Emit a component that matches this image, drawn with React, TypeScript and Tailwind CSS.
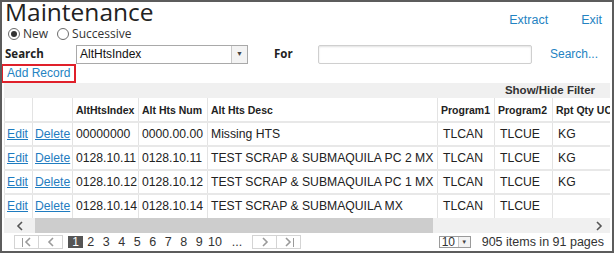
import { ReactNode } from 'react';

const sans = "font-['Open_Sans','Liberation_Sans',sans-serif]";
const arial = "font-['Liberation_Sans',Arial,sans-serif]";

type Row = { index: string; num: string; desc: string; p1: string; p2: string; uom: string };

const rows: Row[] = [
  { index: '00000000', num: '0000.00.00', desc: 'Missing HTS', p1: 'TLCAN', p2: 'TLCUE', uom: 'KG' },
  { index: '0128.10.11', num: '0128.10.11', desc: 'TEST SCRAP & SUBMAQUILA PC 2 MX', p1: 'TLCAN', p2: 'TLCUE', uom: 'KG' },
  { index: '0128.10.12', num: '0128.10.12', desc: 'TEST SCRAP & SUBMAQUILA PC 1 MX', p1: 'TLCAN', p2: 'TLCUE', uom: 'KG' },
  { index: '0128.10.14', num: '0128.10.14', desc: 'TEST SCRAP & SUBMAQUILA MX', p1: 'TLCAN', p2: 'TLCUE', uom: '' },
];

const columns = [
  { label: '', width: 28 },
  { label: '', width: 40 },
  { label: 'AltHtsIndex', width: 66 },
  { label: 'Alt Hts Num', width: 69 },
  { label: 'Alt Hts Desc', width: 230 },
  { label: 'Program1', width: 57 },
  { label: 'Program2', width: 58 },
  { label: 'Rpt Qty UOM', width: 80 },
];

function Radio({ checked, label }: { checked?: boolean; label: string }) {
  return (
    <label className="flex items-center gap-[3px]">
      <span className="w-[12px] h-[12px] rounded-full border border-[#6b6b6b] bg-white flex items-center justify-center">
        {checked && <span className="w-[6px] h-[6px] rounded-full bg-[#333]" />}
      </span>
      <span className="text-[12px] text-[#333] leading-none">{label}</span>
    </label>
  );
}

function Chevron({ dir, className }: { dir: 'left' | 'right'; className?: string }) {
  return (
    <svg width="8" height="10" viewBox="0 0 8 10" className={className}>
      <polyline
        points={dir === 'left' ? '6,1 2,5 6,9' : '2,1 6,5 2,9'}
        fill="none"
        stroke="currentColor"
        strokeWidth="1.6"
      />
    </svg>
  );
}

function PagerBtn({ children }: { children: ReactNode }) {
  return (
    <span className="w-[25px] h-[14px] border border-[#d4d4d4] flex items-center justify-center text-[#9a9a9a] -ml-px first:ml-0">
      {children}
    </span>
  );
}

export default function App() {
  return (
    <div className={`w-[614px] h-[253px] border-2 border-[#5c5c5c] bg-white overflow-hidden flex flex-col ${arial}`}>
      {/* title + links */}
      <div className="h-[24px] shrink-0 flex items-start justify-between pl-[3px] pr-[10px]">
        <h1 className={`${sans} text-[24.5px] leading-[24px] text-[#222] -mt-[2px]`}>Maintenance</h1>
        <div className="flex gap-[33px] text-[12.5px] text-[#2483c2] pt-[9px]">
          <span>Extract</span>
          <span>Exit</span>
        </div>
      </div>

      {/* mode radios */}
      <div className={`${sans} h-[16px] shrink-0 flex items-center gap-[9px] pl-[6px]`}>
        <Radio checked label="New" />
        <Radio label="Successive" />
      </div>

      {/* search line */}
      <div className="h-[20px] shrink-0 mt-[2px] flex items-center pl-[3px]">
        <span className={`${sans} font-bold text-[11.5px] text-[#222] w-[71px]`}>Search</span>
        <div className="w-[172px] h-[19px] border border-[#a9a9a9] flex bg-white">
          <span className="flex-1 text-[12px] text-[#111] leading-[17px] pl-[3px]">AltHtsIndex</span>
          <span className="w-[16px] border-l border-[#c8c8c8] bg-[#f3f3f3] flex items-center justify-center text-[7px] text-[#444]">▼</span>
        </div>
        <span className={`${sans} font-bold text-[11.5px] text-[#222] ml-[26px] w-[44px]`}>For</span>
        <div className="w-[214px] h-[19px] border border-[#cfcfcf] rounded-[2px] shadow-[inset_0_1px_2px_rgba(0,0,0,0.12)]" />
        <span className="ml-[18px] text-[12px] text-[#2483c2]">Search...</span>
      </div>

      {/* add record */}
      <div className="h-[19px] shrink-0 flex">
        <span className="-ml-[1px] w-[75px] border-2 border-[#e0202a] text-[12px] text-[#2483c2] leading-[15px] pl-[4px] whitespace-nowrap">
          Add Record
        </span>
      </div>

      {/* grid */}
      <div className="h-[167px] shrink-0 ml-[2px] mr-[2px] flex flex-col overflow-hidden">
        <div className="h-[15px] shrink-0 bg-[#f0f0f0] text-[11.5px] font-bold text-[#333] text-right pr-[15px] leading-[15px]">
          Show/Hide Filter
        </div>
        <div className="overflow-hidden h-[120px] shrink-0">
          <table className="table-fixed border-collapse w-[628px]">
            <colgroup>
              {columns.map((c, i) => (
                <col key={i} style={{ width: c.width }} />
              ))}
            </colgroup>
            <thead>
              <tr className="h-[24px]">
                {columns.map((c, i) => (
                  <th
                    key={i}
                    className="text-[10.5px] font-bold text-[#222] text-left align-middle pt-[3px] pl-[3px] border-l border-[#e3e3e3] whitespace-nowrap overflow-hidden"
                  >
                    {c.label}
                  </th>
                ))}
              </tr>
            </thead>
            <tbody>
              {rows.map((r) => (
                <tr key={r.index} className="h-[24px] border-t-2 border-[#e8e8e8] text-[12.2px] text-[#222]">
                  <td className="pl-[2px] border-l border-[#e3e3e3]">
                    <span className="text-[#1f7cc0] underline">Edit</span>
                  </td>
                  <td className="pl-[2px] border-l border-[#e3e3e3]">
                    <span className="text-[#1f7cc0] underline">Delete</span>
                  </td>
                  <td className="pl-[3px] border-l border-[#e3e3e3] whitespace-nowrap">{r.index}</td>
                  <td className="pl-[3px] border-l border-[#e3e3e3] whitespace-nowrap">{r.num}</td>
                  <td className="pl-[3px] border-l border-[#e3e3e3] whitespace-nowrap">{r.desc}</td>
                  <td className="pl-[5px] border-l border-[#e3e3e3]">{r.p1}</td>
                  <td className="pl-[5px] border-l border-[#e3e3e3]">{r.p2}</td>
                  <td className="pl-[5px] border-l border-[#e3e3e3]">{r.uom}</td>
                </tr>
              ))}
            </tbody>
          </table>
        </div>

        {/* horizontal scrollbar */}
        <div className="h-[15px] shrink-0 flex bg-[#f0f0f0] items-center">
          <span className="w-[31px] flex justify-center text-[#555]">
            <Chevron dir="left" />
          </span>
          <span className="w-[398px] h-full bg-[#cdcdcd]" />
          <span className="flex-1" />
          <span className="w-[22px] flex justify-center text-[#555]">
            <Chevron dir="right" />
          </span>
        </div>

        {/* pager */}
        <div className="h-[16px] shrink-0 mt-px flex items-center text-[12.5px] text-[#333]">
          <div className="flex ml-[10px]">
            <PagerBtn>
              <span className="flex items-center">
                <span className="w-px h-[9px] bg-[#9a9a9a] mr-[1px]" />
                <Chevron dir="left" />
              </span>
            </PagerBtn>
            <PagerBtn>
              <Chevron dir="left" />
            </PagerBtn>
          </div>
          <div className="flex items-center ml-[5px]">
            <span className="w-[15px] h-[12px] bg-[#555] text-white text-[12px] leading-[12px] text-center">1</span>
            {['2', '3', '4', '5', '6', '7', '8', '9'].map((n) => (
              <span key={n} className="w-[15.5px] text-center">
                {n}
              </span>
            ))}
            <span className="w-[16px] text-center">10</span>
            <span className="w-[28px] text-center">...</span>
          </div>
          <div className="flex ml-[1px]">
            <PagerBtn>
              <Chevron dir="right" />
            </PagerBtn>
            <PagerBtn>
              <span className="flex items-center">
                <Chevron dir="right" />
                <span className="w-px h-[9px] bg-[#9a9a9a] ml-[1px]" />
              </span>
            </PagerBtn>
          </div>
          <div className="ml-auto flex items-center gap-[11px] pr-[6px]">
            <span className="w-[32px] h-[12px] border border-[#9a9a9a] flex text-[12px] leading-[10px]">
              <span className="flex-1 pl-[2px]">10</span>
              <span className="w-[12px] border-l border-[#c8c8c8] bg-[#f3f3f3] text-[6px] flex items-center justify-center text-[#444]">▼</span>
            </span>
            <span>905 items in 91 pages</span>
          </div>
        </div>
      </div>
    </div>
  );
}
